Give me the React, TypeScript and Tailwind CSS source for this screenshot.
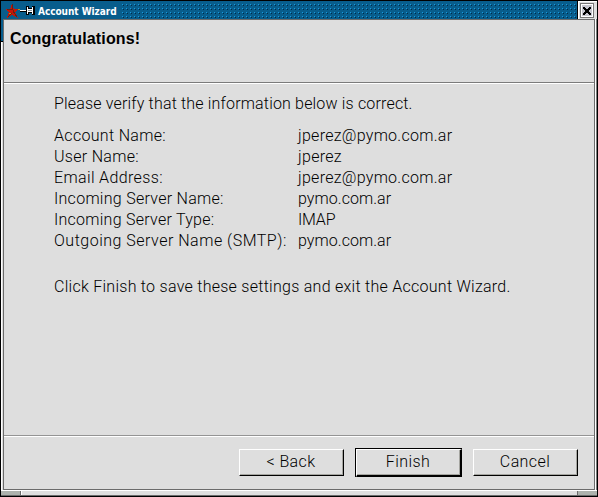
import React from "react";

const rows = [
  { label: "Account Name:", value: "jperez@pymo.com.ar", ls: "tracking-[0.32px]", vs: "tracking-[0.28px]" },
  { label: "User Name:", value: "jperez", ls: "tracking-[0.3px]", vs: "tracking-[0.3px]" },
  { label: "Email Address:", value: "jperez@pymo.com.ar", ls: "tracking-[0.36px]", vs: "tracking-[0.28px]" },
  { label: "Incoming Server Name:", value: "pymo.com.ar", ls: "tracking-[0.28px]", vs: "tracking-[0.05px]" },
  { label: "Incoming Server Type:", value: "IMAP", ls: "tracking-[0.26px]", vs: "tracking-[-0.2px]" },
  { label: "Outgoing Server Name (SMTP):", value: "pymo.com.ar", ls: "tracking-[0.5px]", vs: "tracking-[0.05px]" },
];

function Button({ children }: { children: React.ReactNode }) {
  return (
    <button className="h-[27px] w-[105px] border border-t-white border-l-white border-r-black border-b-black bg-[#dedede]">
      <span className="flex h-full w-full items-center justify-center border-r border-b border-[#a5a5a0] pb-px tracking-[0.4px] whitespace-pre">{children}</span>
    </button>
  );
}

function TitleBar() {
  return (
    <header className="flex h-[18px] shrink-0 bg-[#085d8c]">
      <svg width="35" height="18" viewBox="1 1 35 18" shapeRendering="crispEdges">
        <path d="M12 4l2 5h5l-4 3 3 6-6-3-5 3 2-6-4-3h5z" fill="#c61408" />
        <path d="M12 4l1 6-6-1M13 11l4 6M8 17l4-4" stroke="#6b2010" fill="none" />
        <path d="M18 9h2M9 13h2" stroke="#b58b18" />
        <path d="M20 10h7v2h-7z" fill="#000" />
        <path d="M20 10h7v1h-7z" fill="#fff" />
        <path d="M26 6h3v2h3V6h3v9h-3v-2h-3v2h-3z" fill="#000" />
        <path d="M27 7h1v2h4V7h1v7h-1v-2h-4v2h-1z" fill="#fff" />
        <path d="M28 10h4v1h-4z" fill="#84949c" />
      </svg>
      <h1 className="ml-[2px] pt-[2px] font-['DejaVu_Sans_Condensed',sans-serif] text-[10px] leading-[18px] font-bold tracking-[-0.05px] whitespace-nowrap text-white">Account Wizard</h1>
      <svg className="ml-auto" width="456" height="18" shapeRendering="crispEdges">
        <defs>
          <pattern id="dots" width="4" height="4" patternUnits="userSpaceOnUse">
            <rect x="1" y="3" width="1" height="1" fill="#189ade" />
            <rect x="2" y="0" width="1" height="1" fill="#002c4a" />
          </pattern>
        </defs>
        <rect y="3" width="456" height="14" fill="url(#dots)" />
      </svg>
      <button aria-label="Close" className="flex h-[18px] w-[20px] items-center justify-center border-l border-black bg-[#dedede]">
        <svg width="19" height="18" shapeRendering="crispEdges">
          <path d="M0 0h19v1H1v17H0z" fill="#fff" />
          <path d="M2 2h14v15H2z" fill="#777" />
          <path d="M3 3h12v13H3z" fill="#fff" />
          <path d="M4 4h10v11H4z" fill="#c6c6ce" />
          <path d="M5 6h2v1h1v1h2V7h1V6h2v2h-1v1h-1v2h1v1h1v2h-2v-1h-1v-1H8v1H7v1H5v-2h1v-1h1V9H6V8H5z" fill="#000" />
        </svg>
      </button>
    </header>
  );
}

export default function App() {
  return (
    <div className="flex h-[497px] w-[598px] flex-col overflow-hidden border border-black bg-[#dedede] font-[Roboto,'Liberation_Sans',sans-serif] text-[16px] font-light text-black">
      <TitleBar />
      <div className="flex min-h-0 flex-1">
        <div className="flex w-[2px] flex-col">
          <div className="h-[22px] bg-[#085d8c]" />
          <div className="h-px bg-black" />
          <div className="flex-1 border-r border-[#dedede] bg-white" />
        </div>
        <main className="flex min-w-0 flex-1 flex-col border border-[#6b6b6b]">
          <h2 className="h-[62px] pt-[8px] pl-[6px] font-['Liberation_Sans',Arial,sans-serif] leading-[22px] font-bold tracking-[0.14px]">Congratulations!</h2>
          <div className="h-[2px] border-t border-b border-t-[#7b7b7b] border-b-white" />
          <section className="flex-1 pt-[9px] pl-[50px]">
            <p className="leading-[21px] tracking-[0.17px] whitespace-nowrap">Please verify that the information below is correct.</p>
            <dl className="mt-[11px]">
              {rows.map((r) => (
                <div key={r.label} className="flex h-[21px] leading-[21px] whitespace-nowrap">
                  <dt className={"w-[244px] " + r.ls}>{r.label}</dt>
                  <dd className={r.vs}>{r.value}</dd>
                </div>
              ))}
            </dl>
            <p className="mt-[25px] leading-[21px] tracking-[0.27px] whitespace-nowrap">Click Finish to save these settings and exit the Account Wizard.</p>
          </section>
          <div className="h-[2px] border-t border-b border-t-[#949494] border-b-white" />
          <footer className="flex h-[52px] items-start justify-end gap-[11px] pt-[11px] pr-[16px]">
            <div className="pt-px"><Button>{"< Back"}</Button></div>
            <div className="h-[29px] w-[107px] border border-r-0 border-b-0 border-black">
              <button className="h-[28px] w-[106px] border border-t-white border-l-white border-r-2 border-b-2 border-r-black border-b-black">
                <span className="flex h-full w-full items-center justify-center border-r border-b border-[#a5a5a0] pb-px tracking-[0.4px]">Finish</span>
              </button>
            </div>
            <div className="pt-px"><Button>Cancel</Button></div>
          </footer>
        </main>
        <div className="w-[2px] border-l border-r border-l-white border-r-[#7b7b7b]" />
      </div>
      <div className="flex h-[6px] shrink-0 border-t border-b border-t-white border-b-[#6b6b6b]">
        <div className="w-[20px] border-r border-[#6b6b6b] bg-[#adb2ad]" />
        <div className="flex-1 border-l border-white" />
        <div className="w-[20px] border-l border-[#6b6b6b] bg-[#adb2ad]" />
      </div>
    </div>
  );
}
